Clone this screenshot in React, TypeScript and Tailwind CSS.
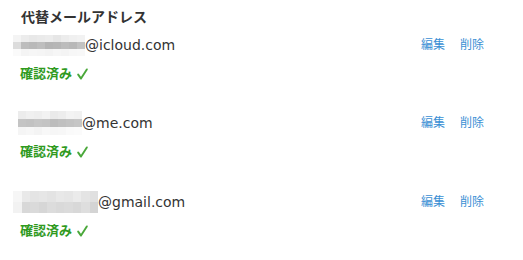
import React from "react";

type Row = {
  domain: string;
  offset: string;
  cellW: number;
  cellH: number;
  cells: string[][];
};

const rows: Row[] = [
  {
    domain: "@icloud.com",
    offset: "pl-[13px]",
    cellW: 8,
    cellH: 7,
    cells: [
      ["#f4f4f4", "#ececec", "#e8e8e8", "#eaeaea", "#ececec", "#e6e6e6", "#ececec", "#f0f0f0", "#f2f2f2"],
      ["#dcdcdc", "#bdbdbd", "#b9b9b9", "#bebebe", "#b4b4b4", "#b6b6b6", "#bcbcbc", "#b8b8b8", "#c2c2c2"],
      ["#fafafa", "#f4f4f4", "#f6f6f6", "#f5f5f5", "#f3f3f3", "#f6f6f6", "#f4f4f4", "#f7f7f7", "#f8f8f8"],
    ],
  },
  {
    domain: "@me.com",
    offset: "pl-[18px]",
    cellW: 8,
    cellH: 8,
    cells: [
      ["#ececec", "#f0f0f0", "#eeeeee", "#f2f2f2", "#eaeaea", "#ededed", "#f3f3f3", "#f1f1f1"],
      ["#c4c4c4", "#c2c2c2", "#c6c6c6", "#c4c4c4", "#bcbcbc", "#c0c0c0", "#c3c3c3", "#c6c6c6"],
      ["#f5f5f5", "#f7f7f7", "#f4f4f4", "#f8f8f8", "#f6f6f6", "#f7f7f7", "#fafafa", "#fbfbfb"],
    ],
  },
  {
    domain: "@gmail.com",
    offset: "pl-[13px]",
    cellW: 8.5,
    cellH: 11,
    cells: [
      ["#f6f6f6", "#e9e9e9", "#e4e4e4", "#e6e6e6", "#e3e3e3", "#e8e8e8", "#e6e6e6", "#ebebeb", "#e4e4e4", "#e0e0e0"],
      ["#f2f2f2", "#d8d8d8", "#dadada", "#d6d6d6", "#dcdcdc", "#d9d9d9", "#dbdbdb", "#d8d8d8", "#dedede", "#d4d4d4"],
    ],
  },
];

function Mosaic({ row }: { row: Row }) {
  return (
    <div className="flex flex-col">
      {row.cells.map((line, i) => (
        <div key={i} className="flex">
          {line.map((c, j) => (
            <div key={j} style={{ width: row.cellW, height: row.cellH, background: c }} />
          ))}
        </div>
      ))}
    </div>
  );
}

function Check() {
  return (
    <svg width="11" height="12" viewBox="0 0 11 12" className="ml-[5px]">
      <path d="M1.2 6.6 L4 10.6 L9.8 1.4" fill="none" stroke="#4aa83a" strokeWidth="1.9" strokeLinecap="round" strokeLinejoin="round" />
    </svg>
  );
}

export default function App() {
  return (
    <main
      className="w-[523px] h-[260px] bg-white text-[#333] overflow-hidden"
      style={{ fontFamily: '"DejaVu Sans", "Noto Sans CJK JP", sans-serif' }}
    >
      <h2 className="pt-[8px] pl-[21px] text-[14px] leading-[18px] font-bold text-[#333]">
        代替メールアドレス
      </h2>
      {rows.map((row, i) => (
        <div key={i} className={i === 0 ? "mt-[9px]" : i === 1 ? "mt-[30px]" : "mt-[31px]"}>
          <div className="flex items-center justify-between h-[20px] pr-[39px]">
            <div className={`flex items-center h-[20px] ${row.offset}`}>
              <Mosaic row={row} />
              <span className="text-[14px] leading-[18px] text-[#333]">{row.domain}</span>
            </div>
            <div className="flex gap-[15px] text-[12px] leading-[16px] text-[#3a8fd4]">
              <a href="#">編集</a>
              <a href="#">削除</a>
            </div>
          </div>
          <div className="mt-[10px] h-[18px] pl-[20px] flex items-center text-[13px] leading-[18px] font-bold text-[#2f9a1e]">
            <span>確認済み</span>
            <Check />
          </div>
        </div>
      ))}
    </main>
  );
}
